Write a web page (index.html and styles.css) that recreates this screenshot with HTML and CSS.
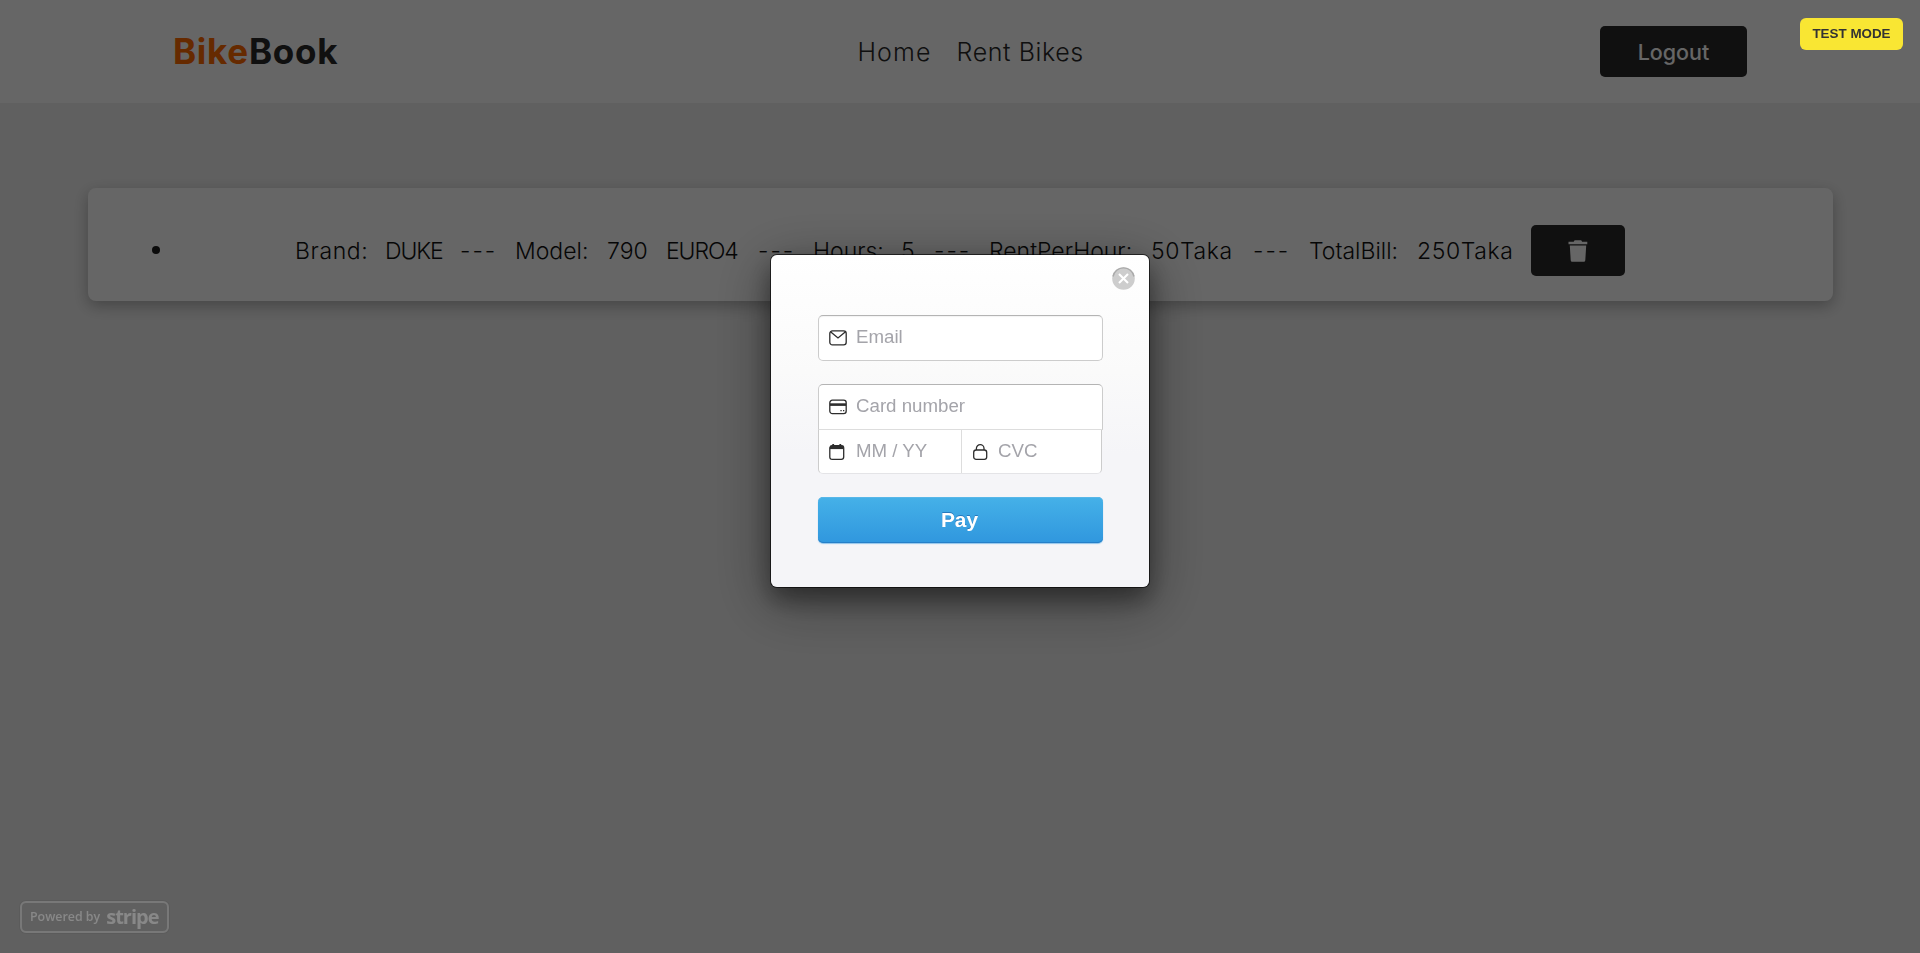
FILE: index.html
```html
<!DOCTYPE html>
<html lang="en">
<head>
<meta charset="utf-8">
<title>BikeBook</title>
<link rel="stylesheet" href="styles.css">
</head>
<body>
<header class="header">
  <div class="logo"><span class="logo-accent">Bike</span><span class="logo-rest">Book</span></div>
  <nav class="nav"><a class="nav-home">Home</a><a class="nav-rent">Rent Bikes</a></nav>
  <button class="btn logout">Logout</button>
</header>
<main class="main">
  <section class="card">
    <span class="bullet"></span>
    <div class="details">
      <span class="wide">Brand:</span><span class="caps">DUKE</span><span class="dash">---</span><span>Model:</span><span>790</span><span class="caps">EURO4</span><span class="dash">---</span><span>Hours:</span><span>5</span><span class="dash">---</span><span>RentPerHour:</span><span class="wide">50Taka</span><span class="dash">---</span><span>TotalBill:</span><span class="wide">250Taka</span>
    </div>
    <button class="btn delete" aria-label="Delete">
      <svg width="20" height="22" viewBox="0 0 20 22"><path d="M.5 1.7h5.2L6.6.3h6.6l.9 1.4h5.2v2.6H.5zM1.8 5.4h16.4l-.9 14.8q-.1 1.5-1.5 1.5H4.2q-1.4 0-1.5-1.5z" fill="#fff"/></svg>
    </button>
  </section>
</main>
<div class="overlay">
  <div class="test-mode">TEST MODE</div>
  <div class="powered"><span>Powered by</span><b>stripe</b></div>
  <form class="modal">
    <div class="close"><svg width="24" height="24" viewBox="0 0 24 24"><circle cx="11.5" cy="12.5" r="11.3" fill="#cdcdcd"/><path d="M1 10.5A10.7 10.7 0 0 1 22 10.5" fill="none" stroke="#aaa" stroke-width="1.4"/><path d="M7 8l9 9m0-9l-9 9" stroke="#fff" stroke-width="2.1"/></svg></div>
    <div class="field email">
      <svg width="18" height="16" viewBox="0 0 18 16"><rect x=".8" y=".9" width="16.4" height="14" rx="2.6"/><path d="M1.5 1.8L9 8l7.5-6.2"/></svg><span>Email</span>
    </div>
    <div class="group">
      <div class="field number">
        <svg width="18" height="16" viewBox="0 0 18 16"><rect x=".8" y="1.2" width="16.4" height="13.4" rx="2.6"/><path d="M1 5.6h16" stroke-width="2.6"/><path d="M11.4 11.7h1.3m1.3 0h1.3"/></svg><span>Card number</span>
      </div>
      <div class="pair">
        <div class="field expiry">
          <svg width="18" height="16" viewBox="0 0 18 16"><rect x=".8" y="1.7" width="13.9" height="13.6" rx="2.4"/><path d="M1 3.4h13.5" stroke-width="3.4"/><path d="M4.2 0v2m7.1-2v2" stroke-width="1.8"/></svg><span>MM / YY</span>
        </div>
        <div class="field cvc">
          <svg width="18" height="16" viewBox="0 0 18 16"><rect x="2.7" y="6" width="13" height="9.3" rx="2.4"/><path d="M5.4 6V4.3a3.8 3.6 0 0 1 7.6 0V6"/></svg><span>CVC</span>
        </div>
      </div>
    </div>
    <button class="pay" type="button">Pay</button>
  </form>
</div>
</body>
</html>
```
FILE: styles.css
```css
* { box-sizing: border-box; }
body { margin: 0; height: 953px; overflow: hidden; background: #f0f0f0; font-family: Inter, "Open Sans", sans-serif; color: #282828; }
.header { height: 103px; padding: 0 173px 0 173px; background: #fff; display: flex; align-items: center; justify-content: space-between; }
.logo { display: flex; width: 430px; font-size: 35px; font-weight: 700; line-height: 48px; padding-bottom: 2px; }
.logo-accent { width: 76px; color: #ff6a00; letter-spacing: .7px; }
.logo-rest { color: #282828; letter-spacing: .7px; }
.nav { width: 488px; display: flex; gap: 25px; font-size: 25px; font-weight: 300; line-height: 50px; letter-spacing: .6px; }
.nav-home { letter-spacing: 1.1px; }
.btn { border: 0; border-radius: 5px; background: #282828; color: #fff; font-family: inherit; }
.logout { width: 147px; height: 51px; padding: 0; font-size: 21.5px; font-weight: 500; }
.main { padding: 85px 87px 0 88px; }
.card { height: 113px; padding: 37px 208px 0 64px; border-radius: 8px; background: #fff; box-shadow: 0 5px 15px rgba(0,0,0,.28); display: flex; align-items: flex-start; }
.bullet { width: 8px; height: 8px; margin-top: 21px; border-radius: 50%; background: #1c1c1c; }
.details { margin-left: 135px; display: grid; grid-template-columns: 90px 75px 55px 92px 59px 92px 55px 88px 33px 55px 162px 102px 56px 108px 114px; font-size: 23px; font-weight: 300; line-height: 53px; white-space: nowrap; color: #111; }
.dash { letter-spacing: 2px; }
.wide { letter-spacing: .6px; }
.caps { letter-spacing: -1.1px; }
.delete { width: 94px; height: 51px; padding: 0; display: flex; align-items: center; justify-content: center; flex: none; }
.overlay { position: fixed; inset: 0; background: rgba(0,0,0,.6); display: flex; justify-content: center; align-items: flex-start; padding-top: 255px; font-family: "Liberation Sans", Arial, sans-serif; }
.test-mode { position: absolute; top: 18px; right: 17px; width: 103px; height: 32px; border-radius: 6px; background: #f9e633; color: #333; font-size: 13.4px; line-height: 31px; font-weight: 700; text-align: center; }
.powered { position: absolute; left: 20px; bottom: 20px; width: 149px; height: 32px; border: 2px solid #787878; border-radius: 6px; color: #888; display: flex; align-items: center; gap: 6px; padding-left: 8px; white-space: nowrap; font: 600 12.4px/28px "Open Sans", sans-serif; box-shadow: 0 0 2px rgba(0,0,0,.2); }
.powered b { font-size: 20px; font-weight: 700; letter-spacing: -1px; line-height: 26px; }
.modal { position: relative; width: 378px; height: 332px; padding: 60px 46px 0 47px; border-radius: 6px; background: linear-gradient(#fff, #fafafa 35%, #f5f5f8 60%); box-shadow: 0 0 0 1px rgba(0,0,0,.62), 0 13px 55px 5px rgba(0,0,0,.35), 0 12px 25px rgba(0,0,0,.4); }
.close { position: absolute; top: 11px; right: 13px; width: 24px; height: 24px; }
.field { display: flex; align-items: center; height: 46px; padding: 0 0 2px 10px; gap: 9px; border: 1px solid #ccc; border-top-color: #b4b4b4; background: #fff; color: #a4a4aa; font-size: 18.7px; line-height: 22px; }
.field svg { fill: none; stroke: #2d2d2d; stroke-width: 1.3; flex: none; margin-top: 1px; }
.email { border-radius: 5px; box-shadow: inset 0 1px 1px rgba(0,0,0,.05); }
.group { margin-top: 23px; }
.number { border-radius: 5px 5px 0 0; border-bottom-color: #ddd; }
.pair { display: grid; grid-template-columns: 144px 140px; }
.pair .field { height: 44px; border-top: 0; border-bottom-color: #e4e4e7; padding-bottom: 1px; }
.pair .expiry { border-right-color: #ddd; border-radius: 0 0 0 5px; }
.pair .cvc { border-left: 0; border-radius: 0 0 5px 0; padding-left: 9px; }
.pay { display: block; width: 285px; height: 46px; margin-top: 23px; border: 0; padding: 0 2px 0 0; border-radius: 5px; color: #fff; background: linear-gradient(#45b1e8, #3097de); box-shadow: inset 0 -1px 0 #267fc8, inset 0 1px 0 #58b7e8, 0 1px 1px rgba(48,151,222,.5); font: 700 20.9px/46px "Liberation Sans", Arial, sans-serif; text-shadow: 0 -1px 0 #2678bb; }
```
